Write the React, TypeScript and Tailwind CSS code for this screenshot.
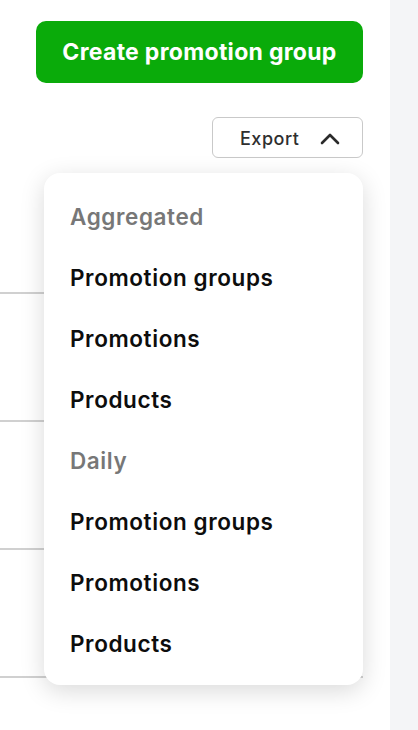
import React from "react";

function ChevronUp() {
  return (
    <svg width="22" height="14" viewBox="0 0 22 14" fill="none">
      <path d="M3 11 L11 3 L19 11" stroke="#2b2b2b" strokeWidth="2.6" strokeLinecap="round" strokeLinejoin="round" />
    </svg>
  );
}

const sections = [
  { title: "Aggregated", items: ["Promotion groups", "Promotions", "Products"] },
  { title: "Daily", items: ["Promotion groups", "Promotions", "Products"] },
];

export default function App() {
  return (
    <div className="flex h-[730px] w-[418px] overflow-hidden bg-white" style={{ fontFamily: "Inter, 'Noto Sans', sans-serif" }}>
      <div className="relative flex-1">
        <div className="flex flex-col items-end pr-[27px] pt-[21px]">
          <button className="flex h-[62px] w-[327px] items-center justify-center rounded-[10px] bg-[#0aab0a] pt-[1px] text-[23px] font-bold tracking-[0.3px] text-white">
            Create promotion group
          </button>
          <div className="relative mt-[34px]">
            <button className="flex h-[41px] w-[151px] items-center gap-[20px] rounded-[6px] border border-[#c9c9c9] bg-white pl-[27px] pt-[2px] text-[18px] font-medium tracking-[0.5px] text-[#2f2f2f]">
              <span>Export</span>
              <ChevronUp />
            </button>
            <div className="absolute right-0 top-[56px] z-10 w-[319px] rounded-[16px] bg-white pb-[11px] pt-[13px] shadow-[0_6px_24px_rgba(0,0,0,0.15)]">
              {sections.map((s) => (
                <div key={s.title}>
                  <div className="flex h-[61px] items-center pl-[26px] text-[22.5px] font-semibold tracking-[0.6px] text-[#777]">{s.title}</div>
                  {s.items.map((it) => (
                    <div key={it} className="flex h-[61px] items-center pl-[26px] text-[22.5px] font-semibold tracking-[0.6px] text-[#0d0d0d]">{it}</div>
                  ))}
                </div>
              ))}
            </div>
          </div>
        </div>
        <div className="mr-[27px] mt-[134px] flex flex-col">
          <div className="h-[2px] bg-[#d0d0d0]" />
          <div className="h-[126px]" />
          <div className="h-[2px] bg-[#d0d0d0]" />
          <div className="h-[126px]" />
          <div className="h-[2px] bg-[#d0d0d0]" />
          <div className="h-[126px]" />
          <div className="h-[2px] bg-[#d0d0d0]" />
        </div>
      </div>
      <div className="w-[28px] bg-[#f4f5f7]" />
    </div>
  );
}
